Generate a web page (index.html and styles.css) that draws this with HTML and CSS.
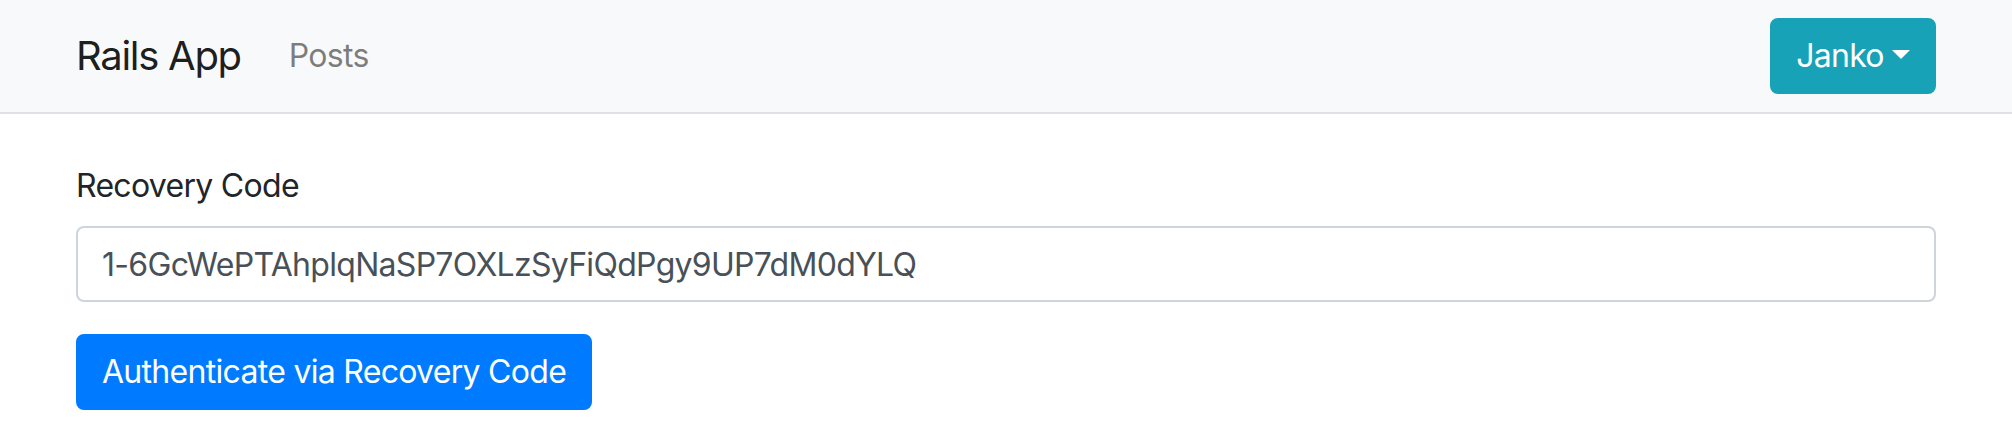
FILE: index.html
```html
<!DOCTYPE html>
<html lang="en">
<head>
<meta charset="utf-8">
<title>Rails App</title>
<link rel="stylesheet" href="styles.css">
</head>
<body>
<nav class="navbar">
  <div class="container nav-inner">
    <div class="nav-left">
      <a class="brand" href="#">Rails App</a>
      <a class="nav-link" href="#">Posts</a>
    </div>
    <button class="btn btn-info dropdown-toggle" type="button">Janko</button>
  </div>
</nav>
<main class="container main">
  <form class="form">
    <div class="form-group">
      <label class="label" for="code">Recovery Code</label>
      <input class="input" id="code" type="text" value="1-6GcWePTAhplqNaSP7OXLzSyFiQdPgy9UP7dM0dYLQ">
    </div>
    <button class="btn btn-primary" type="button">Authenticate via Recovery Code</button>
  </form>
</main>
</body>
</html>
```
FILE: styles.css
```css
* { box-sizing: border-box; }
html, body { margin: 0; }
body {
  font-family: Inter, "Liberation Sans", sans-serif;
  font-size: 32px;
  line-height: 48px;
  letter-spacing: -0.022em;
  color: #212529;
  background: #fff;
}
.container {
  max-width: 1920px;
  margin: 0 auto;
  padding: 0 30px;
}
.navbar {
  background: #f8f9fa;
  border-bottom: 2px solid #dee2e6;
  padding: 16px 0;
}
.nav-inner {
  display: flex;
  align-items: center;
  justify-content: space-between;
}
.nav-left {
  display: flex;
  align-items: center;
}
.brand {
  font-size: 40px;
  line-height: 60px;
  letter-spacing: -0.032em;
  padding: 10px 0;
  margin-right: 32px;
  color: rgba(0,0,0,.9);
  text-decoration: none;
}
.nav-link {
  padding: 16px;
  color: rgba(0,0,0,.5);
  text-decoration: none;
}
.btn {
  font-family: inherit;
  font-size: 32px;
  line-height: 48px;
  letter-spacing: inherit;
  padding: 12px 24px;
  border: 2px solid transparent;
  border-radius: 8px;
  color: #fff;
  cursor: pointer;
  display: inline-block;
}
.btn-info { background: #17a2b8; border-color: #17a2b8; }
.btn-primary { background: #007bff; border-color: #007bff; }
.dropdown-toggle::after {
  content: "";
  display: inline-block;
  margin-left: 0.255em;
  vertical-align: 0.255em;
  border-top: 0.3em solid;
  border-right: 0.3em solid transparent;
  border-left: 0.3em solid transparent;
  border-bottom: 0;
}
.main { padding-top: 48px; }
.form-group { margin-bottom: 32px; }
.label {
  display: block;
  margin-bottom: 16px;
}
.input {
  display: block;
  width: 100%;
  height: 76px;
  padding: 12px 24px;
  font-family: inherit;
  font-size: 32px;
  line-height: 48px;
  letter-spacing: inherit;
  color: #495057;
  background: #fff;
  border: 2px solid #ced4da;
  border-radius: 8px;
  outline: none;
}
```
